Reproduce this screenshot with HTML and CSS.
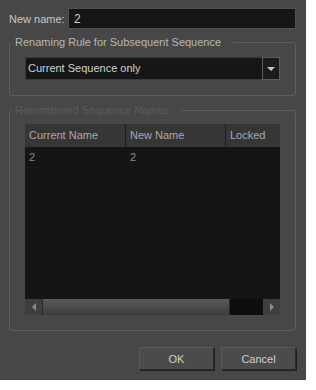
FILE: index.html
```html
<!DOCTYPE html>
<html lang="en">
<head>
  <meta charset="UTF-8">
  <title>Rename Sequence</title>
  <link rel="stylesheet" href="styles.css">
</head>
<body>
  <div class="dialog">
    <div class="name-row">
      <label for="new-name">New name:</label>
      <input type="text" id="new-name" value="2">
    </div>

    <fieldset class="group">
      <legend>Renaming Rule for Subsequent Sequence</legend>
      <div class="combo">
        <span class="combo-text">Current Sequence only</span>
        <span class="combo-btn"><span class="arrow-down"></span></span>
      </div>
    </fieldset>

    <fieldset class="group disabled">
      <legend>Renumbered Sequence Names</legend>
      <div class="table">
        <div class="thead">
          <div class="th col1">Current Name</div>
          <div class="th col2">New Name</div>
          <div class="th col3">Locked</div>
        </div>
        <div class="tbody">
          <div class="tr">
            <div class="td col1">2</div>
            <div class="td col2">2</div>
            <div class="td col3"></div>
          </div>
        </div>
        <div class="hscroll">
          <span class="sb-btn"><span class="arrow-left"></span></span>
          <span class="sb-thumb"></span>
          <span class="sb-trough"></span>
          <span class="sb-btn"><span class="arrow-right"></span></span>
        </div>
      </div>
    </fieldset>

    <div class="buttons">
      <button>OK</button>
      <button>Cancel</button>
    </div>
  </div>
</body>
</html>
```

FILE: styles.css
```css
body {
  margin: 0;
  background-color: #ffffff;
  font-family: "Liberation Sans", Arial, sans-serif;
  font-size: 11px;
}
.dialog {
  width: 306px;
  height: 380px;
  box-sizing: border-box;
  background-color: #474747;
  padding: 8px 10px 0 9px;
  color: #c4c4c4;
}
.name-row {
  display: flex;
  align-items: center;
  height: 21px;
}
.name-row label {
  width: 59px;
  color: #c8c8c8;
}
.name-row input {
  flex: 1;
  height: 21px;
  box-sizing: border-box;
  margin: 0;
  padding: 0 0 0 5px;
  border: 1px solid #505050;
  background-color: #161616;
  color: #d0d0d0;
  font-family: inherit;
  font-size: 12px;
  outline: none;
}
.group {
  margin: 6px 0 0 0;
  padding: 8px 15px 15px 15px;
  border: 1px solid #5e5e5e;
  border-radius: 3px;
}
.group legend {
  padding: 0 12px 0 3px;
  margin-left: -13px;
  height: 14px;
  line-height: 14px;
  color: #b8b8b8;
}
.group.disabled {
  margin-top: 7px;
}
.group.disabled legend {
  color: #5c5c5c;
}
.combo {
  display: flex;
  height: 23px;
  border: 1px solid #3a3a3a;
  background-color: #161616;
  box-sizing: border-box;
}
.combo-text {
  flex: 1;
  line-height: 21px;
  padding-left: 2px;
  color: #d2d2d2;
}
.combo-btn {
  width: 16px;
  border: 1px solid #5c5c5c;
  margin: -1px -1px -1px 0;
  background-color: #1c1c1c;
  display: flex;
  align-items: center;
  justify-content: center;
}
.arrow-down {
  width: 0;
  height: 0;
  border-left: 4px solid transparent;
  border-right: 4px solid transparent;
  border-top: 4px solid #c8c8c8;
}
.table {
  background-color: #151515;
  margin-top: -1px;
}
.thead {
  display: flex;
  height: 23px;
  background-color: #363636;
}
.th {
  line-height: 23px;
  padding-left: 4px;
  color: #a8a8b0;
  border-right: 1px solid #1e1e1e;
  box-sizing: border-box;
}
.col1 {
  width: 101px;
}
.col2 {
  width: 100px;
}
.col3 {
  flex: 1;
  border-right: none;
}
.tbody {
  height: 152px;
}
.tr {
  display: flex;
  height: 20px;
}
.td {
  line-height: 20px;
  padding-left: 4px;
  color: #8a8a8a;
  box-sizing: border-box;
}
.hscroll {
  display: flex;
  height: 16px;
}
.sb-btn {
  width: 17px;
  background-color: #3e3e3e;
  display: flex;
  align-items: center;
  justify-content: center;
}
.arrow-left {
  border-top: 4px solid transparent;
  border-bottom: 4px solid transparent;
  border-right: 4px solid #8a8a8a;
}
.arrow-right {
  border-top: 4px solid transparent;
  border-bottom: 4px solid transparent;
  border-left: 4px solid #8a8a8a;
}
.sb-thumb {
  width: 186px;
  background: linear-gradient(#5a5a5a, #3c3c3c);
  border-left: 1px solid #2a2a2a;
  border-right: 1px solid #2a2a2a;
}
.sb-trough {
  flex: 1;
  background-color: #0e0e0e;
}
.buttons {
  display: flex;
  justify-content: flex-end;
  gap: 7px;
  margin-top: 16px;
}
.buttons button {
  width: 75px;
  height: 23px;
  margin: 0;
  padding: 0;
  background-color: #4b4b4b;
  border: 1px solid #2a2a2a;
  border-top-color: #5a5a5a;
  border-left-color: #5a5a5a;
  box-shadow: 1px 1px 0 #202020;
  color: #d0d0d0;
  font-family: inherit;
  font-size: 11px;
}
```
